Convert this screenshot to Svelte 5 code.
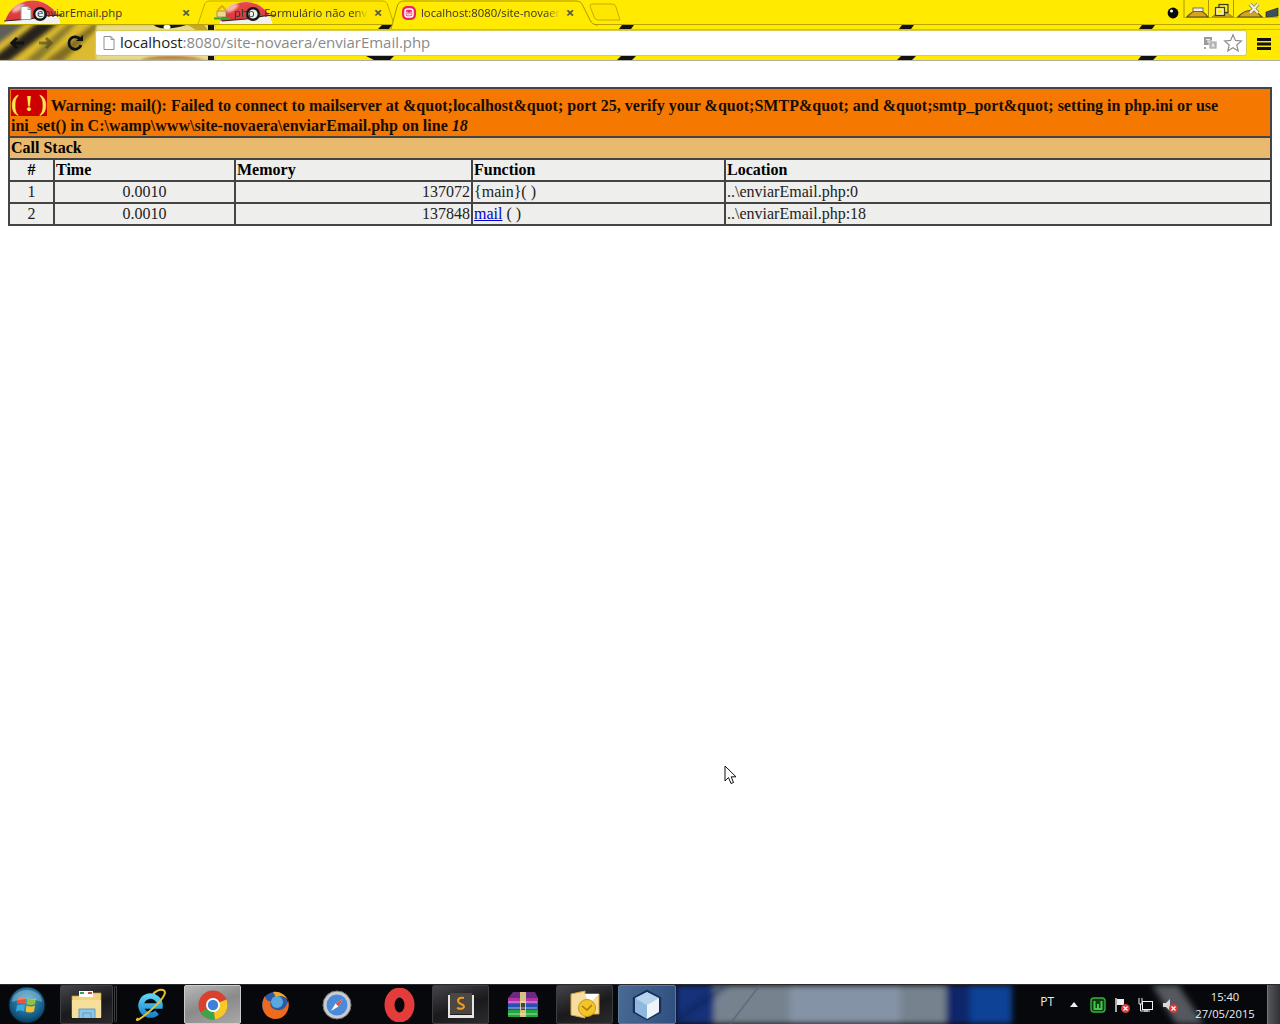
<script>
  const rows = [
    { n: 1, t: '0.0010', m: '137072', loc: '..\\enviarEmail.php:0' },
    { n: 2, t: '0.0010', m: '137848', loc: '..\\enviarEmail.php:18' }
  ];
</script>

<div class="page">
  <header class="chrome">
    <svg class="art" width="1280" height="61" viewBox="0 0 1280 61" aria-hidden="true">
      <defs>
        <filter id="b1"><feGaussianBlur stdDeviation="2.2" /></filter>
        <filter id="b2"><feGaussianBlur stdDeviation="1" /></filter>
        <clipPath id="c1"><path d="M0 0H196L204 24H0Z" /></clipPath>
        <clipPath id="c2"><path d="M200 0H386L394 24H207Z" /></clipPath>
        <clipPath id="c3"><path d="M0 25H216V60H0Z" /></clipPath>
        <clipPath id="rA"><path d="M0 0H70V15L44 16 30 19 4 21H0Z" /></clipPath>
        <clipPath id="rB"><path d="M200 0H285V15L264 16 246 19 222 21H200Z" /></clipPath>
        <linearGradient id="red" x1="0" y1="0" x2="0" y2="1"><stop offset="0" stop-color="#e8484a" /><stop offset="1" stop-color="#c01818" /></linearGradient>
      </defs>
      <rect width="1280" height="61" fill="#ffea00" />
      <path d="M0 24.5H1280" stroke="#b8a600" fill="none" />
      <path d="M198 24 L204 6 Q205 1 210 1 H382 Q387 1 388 6 L394 24" fill="#ffe600" stroke="#c2ad00" />
      <path d="M590 6 Q590 4 593 4 H612 Q615 4 616 7 L620 20 H598 Q595 20 594 17Z" fill="#ffe600" stroke="#c2ad00" />
      <path d="M391 29 L397 7 Q398 1 404 1 H576 Q581 1 583 6 L590 20 Q592 25 598 25" fill="#ffea00" stroke="#a89700" />
      <!-- pokeballs -->
      <g clip-path="url(#c1)">
        <circle cx="32.5" cy="29" r="28.5" fill="#f2f2ec" />
        <circle cx="32.5" cy="29" r="28.5" fill="url(#red)" clip-path="url(#rA)" />
        <path d="M4 21 30 19 44 16 62 15" fill="none" stroke="#3a1a18" stroke-width="1.2" />
        <ellipse cx="18" cy="8" rx="7" ry="3" fill="#f6b8b0" transform="rotate(-30 18 8)" filter="url(#b2)" />
        <circle cx="40" cy="14" r="7" fill="#151515" />
        <circle cx="40" cy="14" r="4.6" fill="#efefe8" />
      </g>
      <g clip-path="url(#c2)">
        <circle cx="246" cy="29" r="27" fill="#f2f2ec" />
        <circle cx="246" cy="29" r="27" fill="url(#red)" clip-path="url(#rB)" />
        <path d="M222 21 246 19 264 16 276 15" fill="none" stroke="#3a1a18" stroke-width="1.2" />
        <ellipse cx="232" cy="8" rx="7" ry="3" fill="#f6b8b0" transform="rotate(-30 232 8)" filter="url(#b2)" />
        <circle cx="253" cy="14" r="7" fill="#151515" />
        <circle cx="253" cy="14" r="4.6" fill="#efefe8" />
      </g>
      <!-- toolbar background image -->
      <g clip-path="url(#c3)">
        <rect x="0" y="25" width="216" height="35" fill="#dcbb30" />
        <g filter="url(#b1)">
          <path d="M-10 20H30L-10 50Z" fill="#5f5e58" />
          <path d="M-12 62 38 22H60L8 62Z" fill="#26231a" />
          <path d="M24 62 70 22H78L38 62Z" fill="#8a7a2a" />
          <path d="M44 62 96 22H104L62 62Z" fill="#5a4c1c" opacity=".7" />
        </g>
        <rect x="96" y="25" width="120" height="35" fill="#e8d98e" filter="url(#b2)" />
        <path d="M154 25C158 30 174 29 186 25Z" fill="#14140e" />
        <ellipse cx="167" cy="27" rx="3.5" ry="2.2" fill="#fff" />
        <path d="M188 25H204L208 30H196Z" fill="#c7a62a" />
        <path d="M140 60C155 54 185 54 205 60Z" fill="#b8854a" filter="url(#b2)" />
        <rect x="208" y="25" width="6" height="35" fill="#141410" />
      </g>
      <!-- stripes -->
      <g fill="#111">
        <path d="M622 25H634L631 29H619Z" />
        <path d="M902 25H914L911 29H899Z" />
        <path d="M1142 25H1155L1152 29H1139Z" />
        <path d="M382 25H392L389 29H378Z" />
        <path d="M621 56H636L632 60H617Z" />
        <path d="M901 56H916L912 60H897Z" />
        <path d="M1141 56H1157L1153 60H1138Z" />
        <path d="M366 56H394L390 60H374Z" />
      </g>
      <rect y="60" width="1280" height="1" fill="#b0aea0" />
      <path d="M216 29.5H1280" stroke="#d6c300" />
      <!-- window buttons -->
      <circle cx="1173" cy="13" r="5.4" fill="#0a0a0a" />
      <circle cx="1171.5" cy="11" r="1.5" fill="#fff" />
      <path d="M1184 0V18M1208.5 0V18M1233.5 0V18" stroke="#a89800" />
      <path d="M1184.5 17.5H1278" stroke="#c8b600" />
      <path d="M1187 17Q1198 4 1208 17Z" fill="#d8a41a" stroke="#4a4a3a" stroke-width="1.2" />
      <path d="M1212 17Q1222 7 1233 17Z" fill="#d8a41a" stroke="#a08a10" />
      <path d="M1238 17Q1250 4 1262 17Z" fill="#d8a41a" stroke="#4a4a3a" stroke-width="1.2" />
      <path d="M1266 17V12L1278 8V16Z" fill="#3e5060" stroke="#1a2a34" stroke-width=".7" />
      <rect x="1193" y="8" width="10" height="3.4" fill="#f0f0e8" stroke="#555" stroke-width=".8" />
      <rect x="1219" y="4.5" width="9" height="8" fill="#ffea00" stroke="#3a3a28" stroke-width="1.2" />
      <rect x="1215.5" y="7.5" width="9" height="8" fill="#f3eeb0" stroke="#3a3a28" stroke-width="1.2" />
      <rect x="1218" y="10" width="4" height="3" fill="#ffea00" />
      <path d="M1250 4L1258 13M1258 4L1250 13" stroke="#8a8a70" stroke-width="4" />
      <path d="M1250 4L1258 13M1258 4L1250 13" stroke="#f4f2dc" stroke-width="2" />
    </svg>

    <div class="tabs">
      <div class="tab first">
        <svg class="fav" width="16" height="16" viewBox="0 0 16 16"><path d="M3 1.5H10L13 4.5V14.5H3Z" fill="#fff" stroke="#9a9a9a" /><path d="M10 1.5V4.5H13" fill="none" stroke="#9a9a9a" /></svg>
        <span class="title">enviarEmail.php</span>
        <span class="x">×</span>
      </div>
      <div class="tab second">
        <svg class="fav" width="16" height="16" viewBox="0 0 16 16"><path d="M4 5 8 1 12 5" fill="none" stroke="#e5a81a" stroke-width="2" /><rect x="3" y="6" width="9" height="6" fill="#f0d890" stroke="#777" stroke-width=".7" /><path d="M0 13.5H16" stroke="#3aa52a" stroke-width="2" /></svg>
        <span class="title">php - Formulário não envia</span>
        <span class="x">×</span>
      </div>
      <div class="tab third">
        <svg class="fav" width="16" height="16" viewBox="0 0 16 16"><rect x="1" y="1" width="14" height="14" rx="5" fill="#f0245f" /><rect x="4" y="4" width="8" height="8" rx="2.5" fill="none" stroke="#fff" stroke-width="1.5" /><path d="M6 6.5V10H10V6.5M8 7.5V10" fill="none" stroke="#fff" /></svg>
        <span class="title">localhost:8080/site-novaera</span>
        <span class="x">×</span>
      </div>
    </div>

    <div class="toolbar">
      <div class="nav">
        <svg width="20" height="20" viewBox="0 0 20 20"><path d="M17 10H6M10 5 5 10 10 15" fill="none" stroke="#111" stroke-width="3" /></svg>
        <svg width="20" height="20" viewBox="0 0 20 20"><path d="M3 10H14M10 5 15 10 10 15" fill="none" stroke="#4a4318" stroke-width="3" opacity=".6" /></svg>
        <svg width="20" height="20" viewBox="0 0 20 20"><path d="M15.5 7A6.2 6.2 0 1 0 16 12" fill="none" stroke="#111" stroke-width="2.8" /><path d="M11 8H18V2Z" fill="#111" /></svg>
      </div>
      <div class="omni">
        <svg width="14" height="16" viewBox="0 0 14 16"><path d="M2 1.5H9L12 4.5V14.5H2Z" fill="#fff" stroke="#8f8f8f" /><path d="M9 1.5V4.5H12" fill="none" stroke="#8f8f8f" /></svg>
        <span class="url"><b>localhost</b>:8080/site-novaera/enviarEmail.php</span>
        <svg class="tr" width="15" height="15" viewBox="0 0 15 15"><rect x="1" y="1" width="8" height="8" fill="#9a9a9a" /><rect x="6" y="5" width="8" height="8" fill="#b4b4b4" stroke="#fff" stroke-width=".6" /><path d="M3 3.5H7M5 3.5V7M9 11 10 7.5 11 11" stroke="#fff" fill="none" stroke-width=".8" /><path d="M1 12H3M2 11V13" stroke="#888" /></svg>
        <svg width="20" height="20" viewBox="0 0 20 20"><path d="M10 1.8 12.4 7.4 18.4 8 13.8 12 15.2 18 10 14.8 4.8 18 6.2 12 1.6 8 7.6 7.4Z" fill="#fff" stroke="#8e8e8e" stroke-width="1.2" /></svg>
      </div>
      <svg class="menu" width="14" height="14" viewBox="0 0 14 14"><path d="M0 2.5H14M0 7H14M0 11.5H14" stroke="#111" stroke-width="3" /></svg>
    </div>
  </header>

  <main class="content">
    <table>
      <colgroup><col class="c1" /><col class="c2" /><col class="c3" /><col class="c4" /><col class="c5" /></colgroup>
      <tbody>
        <tr>
          <th colspan="5" class="warn"><span class="bang">( ! )</span> Warning: mail(): Failed to connect to mailserver at &amp;quot;localhost&amp;quot; port 25, verify your &amp;quot;SMTP&amp;quot; and &amp;quot;smtp_port&amp;quot; setting in php.ini or use ini_set() in C:\wamp\www\site-novaera\enviarEmail.php on line <i>18</i></th>
        </tr>
        <tr><th colspan="5" class="stack">Call Stack</th></tr>
        <tr class="grey">
          <th class="mid">#</th><th>Time</th><th>Memory</th><th>Function</th><th>Location</th>
        </tr>
        {#each rows as r, i}
          <tr class="grey">
            <td class="mid">{r.n}</td>
            <td class="mid">{r.t}</td>
            <td class="right">{r.m}</td>
            <td>{#if i === 0}{'{main}( )'}{:else}<a href="#mail">mail</a> ( ){/if}</td>
            <td>{r.loc}</td>
          </tr>
        {/each}
      </tbody>
    </table>
  </main>

  <footer class="taskbar">
    <svg class="wall" width="1280" height="39" viewBox="0 0 1280 39" aria-hidden="true">
      <defs>
        <filter id="wb"><feGaussianBlur stdDeviation="3" /></filter>
        <radialGradient id="orb" cx=".5" cy=".35" r=".7"><stop offset="0" stop-color="#4aa0c8" /><stop offset=".7" stop-color="#135a84" /><stop offset="1" stop-color="#0a2e48" /></radialGradient>
        <linearGradient id="ie" x1="0" y1="0" x2="0" y2="1"><stop offset="0" stop-color="#5cd0f4" /><stop offset="1" stop-color="#1a88d0" /></linearGradient>
      </defs>
      <g filter="url(#wb)">
        <rect x="676" width="40" height="39" fill="#12337a" />
        <rect x="714" width="232" height="39" fill="#76838f" />
        <rect x="790" width="110" height="39" fill="#8593a6" />
        <rect x="946" width="24" height="39" fill="#08286a" />
        <rect x="970" width="42" height="39" fill="#0a4296" />
        <path d="M1152 0H1178L1204 39H1176Z" fill="#55585e" />
      </g>
      <path d="M672 39 726 0" stroke="#10204a" stroke-width="3" opacity=".8" filter="url(#wb)" />
      <path d="M730 39 760 0" stroke="#5a5f78" stroke-width="2" opacity=".6" />
    </svg>

    <div class="apps">
      <div class="slot start">
        <svg width="38" height="38" viewBox="0 0 38 38"><circle cx="19" cy="19" r="18" fill="url(#orb)" stroke="#0c2030" /><path d="M10 12Q14 10 18 12L17 18Q13 16 9 18Z" fill="#e8563a" /><path d="M19.5 12Q24 14 28 12L27 18Q23 20 18.5 18Z" fill="#8cc63f" /><path d="M9 19.5Q13 17.5 17 19.5L16 25.5Q12 23.5 8 25.5Z" fill="#3ba7e0" /><path d="M18.5 19.5Q23 21.5 27 19.5L26 25.5Q22 27.5 17.5 25.5Z" fill="#f5c02a" /><path d="M4 16A15 12 0 0 1 34 16Q19 10 4 16Z" fill="#cbe8f5" opacity=".35" /></svg>
      </div>
      <div class="slot on w53">
        <svg width="36" height="32" viewBox="0 0 36 32"><path d="M3 7H14L16 4H32V28H3Z" fill="#f2d27a" stroke="#b89a40" stroke-width=".7" /><path d="M10 2H24V8H10Z" fill="#fff" /><path d="M11 3H15V5H11Z" fill="#3aa04a" /><path d="M19 3H23V5H19Z" fill="#d04a3a" /><rect x="3" y="11" width="29" height="18" fill="#f6df9a" /><path d="M10 29V20H26V29M14 29V24H22V29" fill="#8cc4e6" stroke="#5c9cc8" /></svg>
      </div>
      <div class="grip"></div>
      <div class="slot ie">
        <svg width="32" height="34" viewBox="0 0 32 34"><path d="M6 18H25A9.5 9.5 0 1 0 22 24.5" fill="none" stroke="url(#ie)" stroke-width="5.5" /><path d="M3 30C-1 35 7 30 16 22 25 14 34 4 28 2 25 1 21 3 18 6" fill="none" stroke="#e8c02c" stroke-width="2" /></svg>
      </div>
      <div class="slot on lit w57">
        <svg width="30" height="30" viewBox="0 0 30 30"><circle cx="15" cy="15" r="14.5" fill="#d8412f" /><path d="M15 15 2.5 22.2A14.5 14.5 0 0 0 17 29.4Z" fill="#3aa54a" /><path d="M15 15 17 29.4A14.5 14.5 0 0 0 28.4 9.5Z" fill="#f6c828" /><circle cx="15" cy="15" r="7" fill="#fff" /><circle cx="15" cy="15" r="5.2" fill="#3f80d8" /></svg>
      </div>
      <div class="slot w62 fx">
        <svg width="32" height="32" viewBox="0 0 32 32"><circle cx="16" cy="16" r="13" fill="#2a5aa8" /><circle cx="18" cy="13" r="6" fill="#58a8e0" /><path d="M6 7C1 15 3 28 15 30 26 31 32 20 29 11 28 19 23 22 18 21 13 20 10 17 12 12 9 13 7 11 6 7Z" fill="#ee6a1c" /><path d="M14 3C20 2 26 5 29 11 26 7 21 6 17 8Z" fill="#f5a623" /></svg>
      </div>
      <div class="slot w62">
        <svg width="30" height="30" viewBox="0 0 30 30"><circle cx="15" cy="15" r="14" fill="#c8ccd2" stroke="#777" /><circle cx="15" cy="15" r="10.5" fill="#4a8ad8" /><path d="M21 9 16.5 16.5 9 21 13.5 13.5Z" fill="#fff" /><path d="M21 9 16.5 16.5 13.5 13.5Z" fill="#e05040" /></svg>
      </div>
      <div class="slot w62">
        <svg width="31" height="34" viewBox="0 0 31 34"><ellipse cx="15.5" cy="17" rx="10" ry="12.5" fill="none" stroke="#e23c3c" stroke-width="10" /></svg>
      </div>
      <div class="slot on w57 sub">
        <svg width="32" height="30" viewBox="0 0 32 30"><path d="M3 25H29V28H3Z" fill="#e6e6e6" /><path d="M3 5V26H5V7H27V26H29V5Z" fill="#e4e4e4" /><rect x="5" y="3" width="22" height="21" fill="#4c4740" /><path d="M19 8Q14 7 13 10 13 13 16 14 19 15 19 17 18 20 12 18" fill="none" stroke="#ef9a20" stroke-width="2" /></svg>
      </div>
      <div class="slot w62 rar">
        <svg width="32" height="26" viewBox="0 0 32 26"><rect x="1" y="18" width="30" height="7" fill="#22a838" /><rect x="1" y="12" width="30" height="6" fill="#2450b8" /><rect x="1" y="6" width="30" height="6" fill="#b030a8" /><path d="M6 0H28L31 6H1Z" fill="#6a2a80" /><rect x="13" y="0" width="6" height="25" fill="#d8c080" /><rect x="14" y="11" width="4" height="7" fill="#444" /><path d="M1 10H30M1 16H30M1 22H30" stroke="#fff" stroke-width=".6" /></svg>
      </div>
      <div class="slot on w57 out">
        <svg width="32" height="30" viewBox="0 0 32 30"><path d="M2 4 16 1V4H30V24H16V28L2 25Z" fill="#f5dca0" stroke="#d8a030" /><path d="M16 4H30L20 14Z" fill="#fff" /><circle cx="18" cy="18" r="8.5" fill="#f2c52a" stroke="#c89a10" /><path d="M13 16 18 20 23 15" fill="none" stroke="#a87808" stroke-width="1.5" /></svg>
      </div>
      <div class="slot on blue box">
        <svg width="30" height="32" viewBox="0 0 30 32"><path d="M15 2 28 9V23L15 30 2 23V9Z" fill="#cfe2f2" stroke="#16305c" stroke-width="2.5" stroke-linejoin="round" /><path d="M15 16 27 9V23L15 30Z" fill="#eef4fa" /><path d="M15 16 3 9 15 3 27 9Z" fill="#b6d4ee" /><path d="M15 16 3 9V23L15 30Z" fill="#8fb8de" /></svg>
      </div>
    </div>

    <div class="tray">
      <span class="lang">PT</span>
      <svg width="8" height="5" viewBox="0 0 8 5" class="up"><path d="M0 5 4 0 8 5Z" fill="#eee" /></svg>
      <div class="icons">
        <svg width="16" height="16" viewBox="0 0 16 16"><rect x="1" y="1" width="14" height="14" rx="3" fill="#0c3f10" stroke="#38b040" stroke-width="1.4" /><path d="M4.5 4V12H11.5V4M8 7V12" fill="none" stroke="#42c84a" stroke-width="2" /></svg>
        <svg width="18" height="18" viewBox="0 0 18 18"><path d="M3 2V16" stroke="#eee" stroke-width="1.4" /><path d="M4 3H11V9H4Z" fill="#eee" /><circle cx="12.5" cy="12.5" r="4.5" fill="#d83a3a" /><path d="M10.5 10.5 14.5 14.5M14.5 10.5 10.5 14.5" stroke="#fff" stroke-width="1.3" /></svg>
        <svg width="16" height="16" viewBox="0 0 16 16"><rect x="4.5" y="4.5" width="10" height="8" fill="none" stroke="#eee" /><path d="M1 1V7H4V1M2.5 7V14H10M6 14H12" fill="none" stroke="#eee" /></svg>
        <svg width="18" height="18" viewBox="0 0 18 18"><path d="M2 7H5L9 3V15L5 11H2Z" fill="#d8d8d8" /><circle cx="12.5" cy="12.5" r="4.5" fill="#d83a3a" /><path d="M10.5 10.5 14.5 14.5M14.5 10.5 10.5 14.5" stroke="#fff" stroke-width="1.3" /></svg>
      </div>
      <div class="clock"><span>15:40</span><span>27/05/2015</span></div>
      <div class="show"></div>
    </div>
  </footer>

  <svg class="cursor" width="13" height="20" viewBox="0 0 13 20" aria-hidden="true"><path d="M1 1V16L4.5 12.5 7 18.5 9.5 17.5 7.2 11.8H12Z" fill="#fff" stroke="#111" stroke-linejoin="round" /></svg>
</div>

<style>
  :global(body) { margin: 0; background: #fff; }
  .page {
    position: relative;
    display: flex;
    flex-direction: column;
    width: 1280px;
    height: 1024px;
    overflow: hidden;
    font-family: "Liberation Serif", serif;
  }

  /* browser chrome */
  .chrome { position: relative; flex: none; height: 61px; font-family: "Open Sans", "Noto Sans", sans-serif; }
  .art { position: absolute; inset: 0; }
  .tabs { position: relative; display: flex; height: 25px; padding-left: 18px; }
  .tab { display: flex; align-items: center; height: 25px; box-sizing: border-box; gap: 3px; }
  .tab.first { width: 174px; margin-right: 22px; }
  .tab.second { width: 170px; margin-right: 18px; gap: 4px; }
  .tab.third { width: 175px; margin-left: -1px; gap: 4px; }
  .fav { flex: none; }
  .title {
    flex: 1; min-width: 0; overflow: hidden; white-space: nowrap;
    font-size: 11.3px; color: #333;
    mask-image: linear-gradient(90deg, #000 calc(100% - 14px), transparent);
  }
  .first .title { mask-image: none; }
  .x { flex: none; width: 12px; text-align: center; font-size: 15px; font-weight: 700; color: #555; line-height: 1; }
  .toolbar { position: relative; display: flex; align-items: flex-start; height: 35px; padding-top: 5px; box-sizing: border-box; }
  .nav { display: flex; align-items: center; gap: 9px; width: 95px; margin-top: 3px; padding-left: 7px; box-sizing: border-box; }
  .omni {
    display: flex; align-items: center; flex: none;
    width: 1152px; height: 26px; padding: 0 3px 0 6px; box-sizing: border-box;
    background: #fff; border: 1px solid #d8cc50; border-radius: 3px;
  }
  .url { flex: 1; margin: -2px 0 0 4px; font-size: 15px; color: #8a8a8a; white-space: nowrap; letter-spacing: -0.03px; }
  .url b { font-weight: 400; color: #222; }
  .tr { margin-right: 5px; }
  .menu { margin-left: 10px; margin-top: 7px; }

  /* php error table */
  .content { flex: 1; padding: 26px 8px 0; min-height: 0; font-size: 16px; color: #000; }
  table { width: 1264px; table-layout: fixed; border-collapse: separate; border-spacing: 0; border: 1px solid #444; }
  th, td { border: 1px solid #444; padding: 1px; text-align: left; font-weight: 400; }
  th { font-weight: 700; }
  .c1 { width: 45px; } .c2 { width: 181px; } .c3 { width: 237px; } .c4 { width: 253px; } .c5 { width: 546px; }
  .warn { background: #f57900; color: #1a0d00; letter-spacing: 0.013px; }
  .bang { background: #cc0000; color: #fce94f; font-size: x-large; letter-spacing: 0; }
  .stack { background: #e9b96e; }
  .grey th, .grey td { background: #eeeeec; }
  .grey td { color: #222; }
  .grey .mid { text-align: center; }
  .grey .right { text-align: right; }
  a { color: #0000cc; }

  /* taskbar */
  .taskbar {
    position: relative; flex: none; display: flex; justify-content: space-between;
    height: 40px; box-sizing: border-box; background: #07080b; border-top: 1px solid #2a2a2c;
  }
  .wall { position: absolute; left: 0; top: 0; }
  .apps { position: relative; display: flex; height: 39px; }
  .slot { display: flex; align-items: center; justify-content: center; flex: none; box-sizing: border-box; height: 39px; }
  .start { width: 60px; padding-right: 6px; }
  .w53 { width: 53px; } .w57 { width: 57px; } .w62 { width: 62px; }
  .grip { flex: none; width: 3px; height: 36px; margin: 1px 4px 0 1px; border: 1px solid #3a3a3c; box-sizing: border-box; border-radius: 1px; }
  .ie { width: 62px; margin-right: 1px; padding-right: 2px; }
  .fx { margin-left: 3px; }
  .sub { margin-left: 2px; }
  .rar { margin-left: 3px; }
  .out { margin-left: 2px; }
  .box { width: 58px; margin-left: 5px; }
  .on { border: 1px solid #3d3d40; border-radius: 2px; background: linear-gradient(160deg, #44454a, #1a1a1d 55%, #2b2b2e); }
  .lit { background: linear-gradient(160deg, #b8b8b8, #8a8a8a 50%, #a8a8a8); border-color: #ccc; }
  .blue { background: linear-gradient(100deg, #4a6a94, #2f4f80); border-color: #5a7aa0; }
  .tray { position: relative; display: flex; align-items: center; height: 39px; color: #eee; font-family: "Open Sans", "Noto Sans", sans-serif; font-size: 12px; }
  .lang { margin-right: 16px; margin-top: -7px; }
  .up { margin-right: 12px; }
  .icons { display: flex; align-items: center; gap: 7px; margin-right: 15px; }
  .clock { display: flex; flex-direction: column; align-items: center; width: 62px; font-size: 11.2px; line-height: 17px; }
  .show { width: 13px; height: 39px; margin-left: 11px; background: linear-gradient(90deg, #55575a, #303236); border-left: 1px solid #777; box-sizing: border-box; }
  .cursor { position: absolute; left: 724px; top: 765px; }
</style>
